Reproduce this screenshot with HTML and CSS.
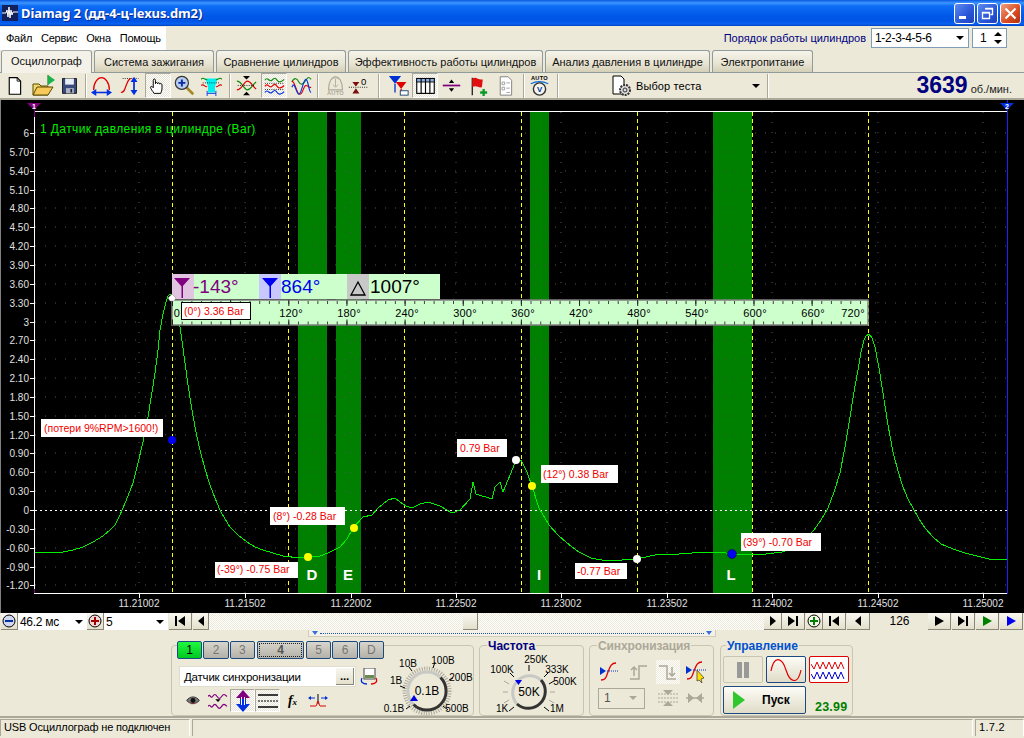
FILE: index.html
```html
<!DOCTYPE html>
<html lang="ru">
<head>
<meta charset="utf-8">
<title>Diamag 2</title>
<link rel="stylesheet" href="styles.css">
</head>
<body>
<svg class="sprite" width="0" height="0" aria-hidden="true">
  <symbol id="i-first" viewBox="0 0 14 10"><path d="M2 0h2v10H2zM12 0v10L5 5z"/></symbol>
  <symbol id="i-prev" viewBox="0 0 14 10"><path d="M10 0v10L4 5z"/></symbol>
  <symbol id="i-next" viewBox="0 0 14 10"><path d="M4 0v10l6-5z"/></symbol>
  <symbol id="i-last" viewBox="0 0 14 10"><path d="M2 0v10l7-5zM10 0h2v10h-2z"/></symbol>
  <symbol id="i-play" viewBox="0 0 14 10"><path d="M3 0v10l9-5z"/></symbol>
</svg>
<div class="app">
  <header class="titlebar">
    <svg class="appicon" width="16" height="16" viewBox="0 0 16 16"><rect width="16" height="16" fill="#12205c"/><path d="M0 8h4l1-3 1 7 1-10 1 11 1-8 1 5 1-3h5" fill="none" stroke="#fff"/></svg>
    <span class="titletext">Diamag 2 (дд-4-ц-lexus.dm2)</span>
    <div class="winbtns">
      <span class="winbtn"><svg width="21" height="21" viewBox="0 0 21 21"><rect x="5" y="13" width="7" height="3" fill="#fff"/></svg></span>
      <span class="winbtn"><svg width="21" height="21" viewBox="0 0 21 21"><path d="M8.5 5.5h7v6h-2M5.5 9.500h7v6h-7z" fill="none" stroke="#fff" stroke-width="1.300"/><path d="M8 5h8v1.500H8zM5 9h8v1.500H5z" fill="#fff"/></svg></span>
      <span class="winbtn close"><svg width="21" height="21" viewBox="0 0 21 21"><path d="M5.500 5.500l10 10M15.500 5.500l-10 10" stroke="#fff" stroke-width="2.200"/></svg></span>
    </div>
  </header>

  <div class="menurow">
    <nav class="menu"><span>Файл</span><span>Сервис</span><span>Окна</span><span>Помощь</span></nav>
    <div class="order">
      <span class="orderlabel">Порядок работы цилиндров</span>
      <span class="combo ordercombo">1-2-3-4-5-6<i class="caret"></i></span>
      <span class="combo spin">1<span class="spinarrows"><i class="caret up"></i><i class="caret"></i></span></span>
    </div>
  </div>

  <div class="tabs">
    <span class="tab active">Осциллограф</span>
    <span class="tab">Система зажигания</span>
    <span class="tab">Сравнение цилиндров</span>
    <span class="tab">Эффективность работы цилиндров</span>
    <span class="tab">Анализ давления в цилиндре</span>
    <span class="tab">Электропитание</span>
  </div>

  <div class="toolbar">
    <span class="tool"><svg viewBox="0 0 24 24"><path d="M6 3h9l4 4v15H6z" fill="#fff" stroke="#000" stroke-width="1.300"/><path d="M15 3v4h4" fill="none" stroke="#000"/></svg></span>
    <span class="tool ml3 big"><svg viewBox="0 0 24 24"><path d="M17 1v10" stroke="#060"/><path d="M17 1l7 5-7 5z" fill="#19b34a"/><path d="M2 10h6l2 2h7v9H2z" fill="#f3d96b" stroke="#5a4a00"/><path d="M2 21l4-8h16l-5 8z" fill="#f7c85a" stroke="#5a4a00"/></svg></span>
    <span class="tool"><svg viewBox="0 0 24 24"><path d="M4 4h16v17H4z" fill="#39497c" stroke="#111"/><path d="M7 4h10v7H7z" fill="#e8ecf4"/><path d="M8 15h9v6H8z" fill="#aab2c4"/><path d="M13 16h2v4h-2z" fill="#223"/></svg></span>
    <span class="sep ml3 mr1"></span>
    <span class="tool"><svg viewBox="0 0 24 24"><path d="M3 17C3 8 8 3 12 3s9 5 9 14" fill="none" stroke="#e00000" stroke-width="1.500"/><path d="M3 20h18" stroke="#0030e0" stroke-width="1.800"/><path d="M0 20l6-4v8zM24 20l-6-4v8z" fill="#0030e0"/></svg></span>
    <span class="tool ml3"><svg viewBox="0 0 24 24"><path d="M3 4h18" stroke="#000" stroke-dasharray="1 1.500"/><path d="M1 20c4 0 4-3 6-8s3-8 6-8" fill="none" stroke="#e00000" stroke-width="1.400"/><path d="M16 6v13" stroke="#0030e0" stroke-width="2"/><path d="M16 2l4 6h-8zM16 23l4-6h-8z" fill="#0030e0"/></svg></span>
    <span class="tool on ml2"><svg viewBox="0 0 24 24"><path d="M7 21c-2-3-4-5-4-7 0-1.500 2-1 3 .500V6c0-2 2.500-2 2.500 0v4c0-2 2.500-2 2.500 0 0-1.500 2.500-1.500 2.500 .500 0-1.500 2.500-1 2.500 .800V16c0 2-1 3-1.500 5z" fill="#fff" stroke="#000" stroke-width="1.100"/></svg></span>
    <span class="tool"><svg viewBox="0 0 24 24"><path d="M14 14l8 8" stroke="#a8862a" stroke-width="3"/><circle cx="9" cy="9" r="7.500" fill="#b9cdf0" stroke="#333" stroke-width="1.300"/><path d="M5 9h8M9 5v8" stroke="#0a2ca0" stroke-width="2.200"/></svg></span>
    <span class="tool ml1"><svg viewBox="0 0 24 24"><path d="M5 4h14l-3 9v7H8v-7z" fill="#00f0f0"/><path d="M0 5c3-4 5 2 7 0M17 5c2 2 4-4 7 0" fill="none" stroke="#0a8a0a" stroke-width="1.200"/><path d="M0 12c3-3 5 3 7 1M17 13c2 2 4-4 7-1" fill="none" stroke="#e00000" stroke-width="1.200"/><path d="M7 21h10" stroke="#0030e0"/><path d="M7 18v6M17 18v6" stroke="#0030e0"/><path d="M2 9h20" stroke="#000" stroke-dasharray="1 1.500"/></svg></span>
    <span class="sep ml5 mr2"></span>
    <span class="tool"><svg viewBox="0 0 24 24"><path d="M1 7c6 0 8 10 12 10s5-5 10-9" fill="none" stroke="#0a8a0a" stroke-width="1.300"/><path d="M1 17c6 0 8-10 12-10s5 5 10 9" fill="none" stroke="#e00000" stroke-width="1.300"/><path d="M2 12h20" stroke="#000" stroke-dasharray="1 1.500"/><path d="M8 1h8l-4 4zM8 23h8l-4-4z"/></svg></span>
    <span class="tool on ml2"><svg viewBox="0 0 24 24"><path d="M1 6c3-5 5 3 8 0s4-3 6 0 5 2 8-1" fill="none" stroke="#0a8a0a" stroke-width="1.300"/><path d="M1 13c3-5 5 3 8 0s4-3 6 0 5 2 8-1" fill="none" stroke="#e00000" stroke-width="1.300"/><path d="M1 20c3-5 5 3 8 0s4-3 6 0 5 2 8-1" fill="none" stroke="#0030e0" stroke-width="1.300"/><path d="M1 9.500h22M1 16.500h22" stroke="#000" stroke-dasharray="1 1.500"/></svg></span>
    <span class="tool ml1"><svg viewBox="0 0 24 24"><path d="M1 8c3-6 6-4 8 0s5 3 8-2 4-3 6-1" fill="none" stroke="#0a8a0a" stroke-width="1.300"/><path d="M1 7c4 0 5 15 9 15s4-10 7-10 3 3 6 2" fill="none" stroke="#e00000" stroke-width="1.300"/><path d="M1 14c3-9 5 8 8 8s5-17 8-17 3 15 6 15" fill="none" stroke="#0030e0" stroke-width="1.300"/></svg></span>
    <span class="sep ml3 mr3"></span>
    <span class="tool"><svg viewBox="0 0 24 24"><path d="M4 17C4 7 8 2 12 2s8 5 8 15z" fill="#ece9d8" stroke="#aca899" stroke-width="1.300"/><path d="M12 4v9M9 5l3-3 3 3M9 11l3 3 3-3" fill="none" stroke="#aca899"/><text x="12" y="23" class="toolmini greyed">AUTO</text></svg></span>
    <span class="tool mln3"><svg viewBox="0 0 24 24"><path d="M5 8h8l-4 5zM5 21h8l-4-6z" fill="#7a0f0f"/><path d="M1 14h22" stroke="#000" stroke-dasharray="1 1.500"/><text x="18" y="11" class="toolzero">0</text></svg></span>
    <span class="sep ml7 mr5"></span>
    <span class="tool"><svg viewBox="0 0 24 24"><path d="M1 1h14l-7 9z" fill="#0030d0"/><path d="M8 10v10" stroke="#0030d0" stroke-width="1.500"/><path d="M9 8h12l-6 8z" fill="#e00000"/><path d="M15 16v6" stroke="#e00000" stroke-width="1.500"/><rect x="14" y="18" width="9" height="5" fill="#fff" stroke="#123a70"/></svg></span>
    <span class="tool on ml1"><svg viewBox="0 0 24 24"><rect x="2" y="4" width="20" height="17" fill="#fff" stroke="#000" stroke-width="1.300"/><rect x="2" y="4" width="20" height="4" fill="#8db1e6" stroke="#000"/><path d="M7 4v17M12 4v17M17 4v17" stroke="#000" stroke-width="1.300"/></svg></span>
    <span class="tool"><svg viewBox="0 0 24 24"><path d="M2 12h20" stroke="#800080" stroke-width="2"/><path d="M9 9h6l-3-4zM9 15h6l-3 4z"/></svg></span>
    <span class="tool"><svg viewBox="0 0 24 24"><path d="M6 3v20" stroke="#000" stroke-width="1.300"/><path d="M6 4c5-3 6 2 12 1l-1 9c-4 1-7-3-11 0z" fill="#e01010"/><path d="M15 20h8M19 16v8" stroke="#0a9a2a" stroke-width="2.600"/></svg></span>
    <span class="tool ml2"><svg viewBox="0 0 24 24"><path d="M6 2h9l4 4v17H6z" fill="#fff" stroke="#777"/><path d="M8 8h3v3H8zM8 14h3v3H8zM13 9h4M13 15h4M13 20h4" fill="none" stroke="#999"/></svg></span>
    <span class="sep ml5 mr1"></span>
    <span class="tool"><svg viewBox="0 0 24 24"><text x="12" y="6" class="toolmini">AUTO</text><path d="M2 10c6-3 14-3 20 0" fill="none" stroke="#0a6ae0" stroke-width="1.300"/><circle cx="12" cy="16" r="7" fill="#f5f4ec" stroke="#333" stroke-width="1.600"/><text x="12" y="19.500" class="toolv">V</text></svg></span>
    <span class="sep ml5"></span>
    <div class="testpick">
      <svg width="22" height="22" viewBox="0 0 22 22"><path d="M2 1h8l3 3v15H2z" fill="#fff" stroke="#000"/><circle cx="14" cy="15" r="5" fill="#ddd" stroke="#333" stroke-width="2" stroke-dasharray="2 1"/><circle cx="14" cy="15" r="2" fill="none" stroke="#333"/></svg>
      <span class="testlabel">Выбор теста</span>
      <i class="caret"></i>
    </div>
    <span class="sep"></span>
    <div class="rpm"><b>3639</b><span>об./мин.</span></div>
  </div>

  <div class="chart">
    <svg width="1024" height="513" viewBox="0 100 1024 513">
      <rect x="0" y="100" width="1024" height="513" fill="#000"/>
      <rect x="0" y="100" width="1" height="513" fill="#808080"/>
      <g fill="#008000">
        <rect x="298" y="112" width="29" height="481"/>
        <rect x="336" y="112" width="25" height="481"/>
        <rect x="530" y="112" width="19" height="481"/>
        <rect x="713" y="112" width="39" height="481"/>
      </g>
      <path class="griddots" d="M35 133H1007M35 152H1007M35 171H1007M35 190H1007M35 208H1007M35 227H1007M35 246H1007M35 265H1007M35 284H1007M35 303H1007M35 322H1007M35 340H1007M35 359H1007M35 378H1007M35 397H1007M35 416H1007M35 435H1007M35 453H1007M35 472H1007M35 491H1007M35 529H1007M35 548H1007M35 567H1007M35 585H1007M139 112V593M245 112V593M351 112V593M456 112V593M561 112V593M667 112V593M772 112V593M878 112V593M983 112V593"/>
      <path class="yellowdash" d="M172.500 112V593M288.500 112V593M404.500 112V593M521.500 112V593M637.500 112V593M752.500 112V593M868.500 112V593"/>
      <path class="zeroline" d="M35 510.500H1007"/>
      <path class="axis" d="M34.500 111V594M34 111.500H1008M34 593.500H1008M30 133.500H34M30 152.500H34M30 171.500H34M30 190.500H34M30 208.500H34M30 227.500H34M30 246.500H34M30 265.500H34M30 284.500H34M30 303.500H34M30 322.500H34M30 340.500H34M30 359.500H34M30 378.500H34M30 397.500H34M30 416.500H34M30 435.500H34M30 453.500H34M30 472.500H34M30 491.500H34M30 510.500H34M30 529.500H34M30 548.500H34M30 567.500H34M30 585.500H34M139.500 594V598M245.500 594V598M351.500 594V598M456.500 594V598M561.500 594V598M667.500 594V598M772.500 594V598M878.500 594V598M983.500 594V598"/>
      <path d="M1007.500 100V594" stroke="#2020ff" fill="none"/>
      <path d="M27 103h14l-7 7z" fill="#800080"/><path d="M34.500 110v7M34.500 589v4" stroke="#800080" fill="none"/>
      <text x="34" y="109" class="markernum">1</text>
      <path d="M1000 103h14l-7 7z" fill="#0030e0"/><text x="1007" y="109" class="markernum">2</text>
      <text x="40" y="133" class="charttitle">1 Датчик давления в цилиндре (Bar)</text>
      <g class="ylabels">
        <text x="29" y="137">6</text><text x="29" y="156">5.70</text><text x="29" y="175">5.40</text><text x="29" y="194">5.10</text><text x="29" y="212">4.80</text><text x="29" y="231">4.50</text><text x="29" y="250">4.20</text><text x="29" y="269">3.90</text><text x="29" y="288">3.60</text><text x="29" y="307">3.30</text><text x="29" y="326">3</text><text x="29" y="344">2.70</text><text x="29" y="363">2.40</text><text x="29" y="382">2.10</text><text x="29" y="401">1.80</text><text x="29" y="420">1.50</text><text x="29" y="439">1.20</text><text x="29" y="457">0.90</text><text x="29" y="476">0.60</text><text x="29" y="495">0.30</text><text x="29" y="514">0</text><text x="29" y="533">-0.30</text><text x="29" y="552">-0.60</text><text x="29" y="571">-0.90</text><text x="29" y="589">-1.20</text>
      </g>
      <g class="xlabels">
        <text x="139" y="607">11.21002</text><text x="245" y="607">11.21502</text><text x="351" y="607">11.22002</text><text x="456" y="607">11.22502</text><text x="561" y="607">11.23002</text><text x="667" y="607">11.23502</text><text x="772" y="607">11.24002</text><text x="878" y="607">11.24502</text><text x="983" y="607">11.25002</text>
      </g>
      <polyline class="trace" points="35,552 45,553 63,552 73,550 83,547 93,542 103,536 110,530 115,525 119,517 123,508 128,496 133,483 138,463 143,442 148,417 152,392 155,373 158,350 160,330 163,314 166,302 168,296 170,294 172,296 175,303 178,316 180,327 183,348 185,363 188,385 192,410 196,432 200,450 205,469 210,485 215,498 220,510 225,519 230,527 238,535 247,542 255,547 263,550 283,556 300,558 320,556 328,553 340,547 347,539 353,528 363,517 372,515 378,508 388,500 395,498 400,502 406,506 412,508 420,504 428,502 440,506 452,513 460,510 470,499 473,482 476,494 492,499 495,487 500,482 503,492 515,463 521,460 527,472 532,486 539,508 549,525 558,535 567,543 579,552 591,558 607,561 637,559 659,554 679,554 706,552 720,552 732,554 758,555 782,552 800,545 807,538 814,530 821,520 828,508 834,492 840,473 845,447 850,417 854,392 858,370 861,352 864,340 866,336 869,334 872,338 875,347 879,368 883,393 888,425 893,452 898,471 903,487 908,499 913,508 919,519 925,528 933,537 941,544 953,549 965,553 977,556 989,559 1007,559"/>
      <g class="dots">
        <circle cx="172" cy="440" r="4" fill="#0000f0"/>
        <circle cx="308" cy="557" r="4" fill="#ffff00"/>
        <circle cx="354" cy="528" r="4" fill="#ffff00"/>
        <circle cx="516" cy="460" r="4" fill="#fff"/>
        <circle cx="532" cy="486" r="4" fill="#ffff00"/>
        <circle cx="637" cy="559" r="4" fill="#fff"/>
        <circle cx="732" cy="554" r="4.500" fill="#0000f0" stroke="#003"/>
      </g>
      <g class="bandletters">
        <text x="312" y="580">D</text><text x="348" y="580">E</text><text x="539" y="580">I</text><text x="731" y="580">L</text>
      </g>
      <rect x="172" y="274" width="268" height="25" fill="#ccffcc"/>
      <rect x="172" y="274" width="22" height="25" fill="#e0c4e0"/>
      <rect x="259" y="274" width="22" height="25" fill="#c8c8ff"/>
      <rect x="347" y="274" width="22" height="25" fill="#c8c8c8"/>
      <path d="M174 278h16l-8 9zM181.500 286h1.500v12h-1.500z" fill="#800080"/>
      <path d="M262 278h16l-8 9zM269.500 286h1.500v12h-1.500z" fill="#0000f0"/>
      <path d="M351 295h14l-7-13z" fill="none" stroke="#000" stroke-width="1.300"/>
      <text x="193" y="293" class="cur purple">-143°</text>
      <text x="281" y="293" class="cur blue">864°</text>
      <text x="370" y="293" class="cur">1007°</text>
      <rect x="172" y="300" width="696" height="25" fill="#ccffcc" stroke="#808080" stroke-width="1.500"/>
      <path class="rulerminor" d="M172 302.500H868M172 323H868"/>
      <path class="rulermajor" d="M172 303H868M172 322.500H868"/>
      <g class="rulerlabels">
        <text x="177" y="317">0</text><text x="291" y="317">120°</text><text x="349" y="317">180°</text><text x="407" y="317">240°</text><text x="465" y="317">300°</text><text x="523" y="317">360°</text><text x="581" y="317">420°</text><text x="639" y="317">480°</text><text x="697" y="317">540°</text><text x="755" y="317">600°</text><text x="813" y="317">660°</text><text x="853" y="317">720°</text>
      </g>
      <path d="M168 298l4-4 4 4-2 3h-4z" fill="#fff" stroke="#888" stroke-width=".5"/>
      <g class="notes">
        <rect x="181.500" y="302.500" width="69" height="17" fill="#fff" stroke="#000"/><text x="184" y="315">(0°) 3.36 Bar</text>
        <rect x="41" y="419" width="122" height="18" fill="#fff"/><text x="44" y="432">(потери 9%RPM&gt;1600!)</text>
        <rect x="270" y="507" width="75" height="18" fill="#fff"/><text x="273" y="520">(8°) -0.28 Bar</text>
        <rect x="215" y="562" width="83" height="16" fill="#fff"/><text x="217" y="573">(-39°) -0.75 Bar</text>
        <rect x="457" y="439" width="50" height="18" fill="#fff"/><text x="460" y="452">0.79 Bar</text>
        <rect x="541" y="465" width="77" height="18" fill="#fff"/><text x="543" y="478">(12°) 0.38 Bar</text>
        <rect x="575" y="563" width="52" height="16" fill="#fff"/><text x="577" y="575">-0.77 Bar</text>
        <rect x="741" y="533" width="80" height="18" fill="#fff"/><text x="743" y="546">(39°) -0.70 Bar</text>
      </g>
    </svg>
  </div>

  <div class="slider">
    <span class="btn sq"><svg width="14" height="14" viewBox="0 0 14 14"><circle cx="7" cy="7" r="6" fill="#cfd8f0" stroke="#000"/><path d="M3 7h8" stroke="#0030a0" stroke-width="2"/></svg></span>
    <span class="scombo first">46.2 мс<i class="caret"></i></span>
    <span class="btn sq"><svg width="14" height="14" viewBox="0 0 14 14"><circle cx="7" cy="7" r="6" fill="#f0d8d8" stroke="#000"/><path d="M3 7h8M7 3v8" stroke="#a00000" stroke-width="2"/></svg></span>
    <span class="scombo second">5<i class="caret"></i></span>
    <span class="btn nav w24"><svg><use href="#i-first"/></svg></span>
    <span class="btn nav w16"><svg><use href="#i-prev"/></svg></span>
    <div class="track"><span class="thumb"></span></div>
    <span class="btn nav w18"><svg><use href="#i-next"/></svg></span>
    <span class="btn nav w24"><svg><use href="#i-last"/></svg></span>
    <span class="btn sq"><svg width="14" height="14" viewBox="0 0 14 14"><circle cx="7" cy="7" r="6" fill="#f4f4e8" stroke="#000"/><path d="M3 7h8M7 3v8" stroke="#008000" stroke-width="2"/></svg></span>
    <span class="btn nav w24"><svg><use href="#i-first"/></svg></span>
    <span class="btn nav w24"><svg><use href="#i-prev"/></svg></span>
    <span class="counter">126</span>
    <span class="btn nav w24"><svg><use href="#i-play"/></svg></span>
    <span class="btn nav w24"><svg><use href="#i-last"/></svg></span>
    <span class="btn nav w24 green"><svg><use href="#i-play"/></svg></span>
    <span class="btn nav w24 blue"><svg><use href="#i-play"/></svg></span>
  </div>

  <div class="rangebar"><i class="rangemark"></i><span class="rangedots"></span><i class="rangemark"></i></div>

  <div class="panel">
    <section class="group channels">
      <div class="chleft">
        <div class="chbtns">
          <span class="ch on">1</span><span class="ch">2</span><span class="ch">3</span><span class="ch big">4</span><span class="ch">5</span><span class="ch">6</span><span class="ch">D</span>
        </div>
        <div class="sensor">
          <div class="sensorbox"><span>Датчик синхронизации</span><span class="btn dots3">...</span></div>
          <svg width="18" height="18" viewBox="0 0 18 18"><rect x="4" y="0" width="11" height="11" fill="#fff" stroke="#444"/><rect x="5" y="7" width="9" height="3" fill="#6a8a50"/><path d="M2 10c-2 4 1 6 5 6" fill="none" stroke="#0030d0" stroke-width="1.300"/><path d="M16 10c2 4-1 6-5 6" fill="none" stroke="#e00000" stroke-width="1.300"/></svg>
        </div>
        <div class="chicons">
          <span class="cicon"><svg width="16" height="13" viewBox="0 0 20 16"><path d="M2 8c4-6 12-6 16 0-4 5-12 5-16 0z" fill="#777" stroke="#222"/><circle cx="10" cy="8" r="3" fill="#111"/><path d="M7 12h5" stroke="#b02020"/></svg></span>
          <span class="cicon"><svg width="20" height="18" viewBox="0 0 22 20"><path d="M0 5c2-4 3 3 5 0s3-3 5 0 3 3 5 0 3-3 6 0" fill="none" stroke="#800080" stroke-width="1.300"/><path d="M0 16c2-4 3 3 5 0s3-3 5 0 3 3 5 0 3-3 6 0" fill="none" stroke="#800080" stroke-width="1.300"/><path d="M8 8h6l-3 3z"/></svg></span>
          <span class="cicon active"><svg width="20" height="22" viewBox="0 0 20 22"><path d="M10 0l7 8h-4v5H7V8H3z" fill="#800080"/><path d="M10 22l-7-8h4V9h6v5h4z" fill="#0030e0"/><path d="M8 7h1v8H8zM11 7h1v8h-1z" fill="#fff"/></svg></span>
          <span class="cicon active"><svg width="20" height="18" viewBox="0 0 20 18"><path d="M0 3h20M0 15h20" stroke="#000" stroke-width="1.300"/><path d="M0 9h20" stroke="#000" stroke-dasharray="2 1"/></svg></span>
          <span class="cicon"><i class="fx">f<sub>x</sub></i></span>
          <span class="cicon"><svg width="20" height="16" viewBox="0 0 20 16"><path d="M10 1v10" stroke="#000"/><path d="M2 13h6c1 0 1-5 2-5s1 5 2 5h6" fill="none" stroke="#e00000"/><path d="M1 5h6M13 5h6" stroke="#0030d0"/><path d="M0 5l3-2v4zM20 5l-3-2v4z" fill="#0030d0"/></svg></span>
        </div>
      </div>
      <svg class="knob" width="88" height="70" viewBox="386 648 88 70">
        <circle cx="427" cy="691" r="22.500" fill="none" stroke="#aca899" stroke-width="4" stroke-dasharray="1 1.500"/>
        <circle cx="427" cy="691" r="19" fill="#ece9d8"/>
        <path d="M413.500 704.500A19 19 0 0 1 440.500 677.500" fill="none" stroke="#c8c8c4" stroke-width="3"/>
        <path d="M440.500 677.500A19 19 0 0 1 413.500 704.500" fill="none" stroke="#333" stroke-width="3"/>
        <path d="M410 706l-4 3M405 688l-5-2M412 671l-3-4M433 668l2-6M449 680l4-2M443 706l5 4" stroke="#000" fill="none"/>
        <path d="M414 695l4 6h-8z" fill="#0000e0"/>
        <g class="knoblab"><text x="394" y="712">0.1В</text><text x="396" y="684">1В</text><text x="408" y="667">10В</text><text x="443" y="664">100В</text><text x="461" y="681">200В</text><text x="457" y="712">500В</text></g>
        <text x="427" y="695" class="knobval">0.1В</text>
      </svg>
    </section>

    <section class="group freq">
      <span class="legend navy">Частота</span>
      <svg class="knob" width="105" height="70" viewBox="479 648 105 70">
        <path d="M549 700l5 3M550 692h5M508 692h-5M509 684l-5-3M509 700l-5 3" stroke="#aca899" fill="none"/>
        <path d="M514 677l-4-4M529 671v-6M544 677l4-4M549 684l5-3M514 707l-5 4M544 707l5 4" stroke="#000" fill="none"/>
        <circle cx="529" cy="692" r="17" fill="#ece9d8"/>
        <path d="M517 704A17 17 0 0 1 541 680" fill="none" stroke="#c8c8c4" stroke-width="3"/>
        <path d="M541 680A17 17 0 0 1 517 704" fill="none" stroke="#333" stroke-width="3"/>
        <path d="M515 680h7l-3.500 5z" fill="#0000e0"/>
        <g class="knoblab"><text x="502" y="673">100K</text><text x="536" y="663">250K</text><text x="557" y="673">333K</text><text x="565" y="685">500K</text><text x="502" y="712">1K</text><text x="557" y="712">1M</text></g>
        <text x="529" y="696" class="knobval">50K</text>
      </svg>
    </section>

    <section class="group sync">
      <span class="legend grey">Синхронизация</span>
      <div class="syncrow">
        <span class="sicon"><svg width="20" height="20" viewBox="0 0 20 20"><path d="M1 18c5 0 5-3 7-8s3-9 8-9" fill="none" stroke="#e00000" stroke-width="1.300"/><path d="M7 9h12" stroke="#0030d0" stroke-dasharray="1 1"/><path d="M0 5l6 4-6 4z" fill="#0030d0"/></svg></span>
        <span class="sicon"><svg width="20" height="20" viewBox="0 0 20 20"><path d="M1 17h9V4h8" fill="none" stroke="#aca899" stroke-width="1.500"/><path d="M5 14V6M2 8l3-3 3 3" fill="none" stroke="#aca899" stroke-width="1.500"/></svg></span>
        <span class="sicon hatch"><svg width="20" height="20" viewBox="0 0 20 20"><path d="M1 4h8v13h9" fill="none" stroke="#aca899" stroke-width="1.500"/><path d="M14 5v8M11 11l3 3 3-3" fill="none" stroke="#aca899" stroke-width="1.500"/></svg></span>
        <span class="sicon"><svg width="22" height="22" viewBox="0 0 22 22"><path d="M1 18c5 0 5-3 7-8s3-9 8-9" fill="none" stroke="#e00000" stroke-width="1.300"/><path d="M7 9h14" stroke="#0030d0" stroke-dasharray="1 1"/><path d="M0 5l6 4-6 4z" fill="#0030d0"/><path d="M11 9l7 8-3 1 1 4-3-3-2 1z" fill="#ffe000" stroke="#333" stroke-width=".7"/></svg></span>
      </div>
      <div class="syncrow low">
        <span class="combo gcombo">1<i class="caret g"></i></span>
        <span class="sicon"><svg width="20" height="20" viewBox="0 0 20 20"><path d="M5 2h10l-5 5zM5 18h10l-5-5z" fill="#aca899"/><path d="M0 6h20M0 10h20M0 14h20" stroke="#aca899" stroke-dasharray="2 1"/></svg></span>
        <span class="sicon"><svg width="20" height="20" viewBox="0 0 20 20"><path d="M1 10h18" stroke="#aca899" stroke-width="1.500"/><path d="M3 5l6 5-6 5zM17 5l-6 5 6 5z" fill="#aca899"/></svg></span>
      </div>
    </section>

    <section class="group control">
      <span class="legend bluel">Управление</span>
      <div class="ctrlrow">
        <span class="cbtn plain"><svg width="18" height="18" viewBox="0 0 18 18"><rect x="3" y="1" width="5" height="16" fill="#999"/><rect x="10" y="1" width="5" height="16" fill="#999"/></svg></span>
        <span class="cbtn"><svg width="32" height="22" viewBox="0 0 32 22"><path d="M1 12C4-4 12-2 16 11s12 15 15 0" fill="none" stroke="#e00000" stroke-width="1.200"/></svg></span>
        <span class="cbtn red"><svg width="36" height="24" viewBox="0 0 36 24"><path d="M0 6l3 5 3-7 3 7 3-7 3 7 3-7 3 7 3-7 3 7 3-7 3 7" fill="none" stroke="#e00000"/><path d="M0 16l3 5 3-7 3 7 3-7 3 7 3-7 3 7 3-7 3 7 3-7 3 7" fill="none" stroke="#0000d0"/></svg></span>
      </div>
      <div class="ctrlrow low">
        <span class="cbtn start"><svg width="12" height="18" viewBox="0 0 12 18"><path d="M0 0l12 9-12 9z" fill="#2ec82e"/></svg><b>Пуск</b></span>
        <span class="fps">23.99</span>
      </div>
    </section>
  </div>

  <footer class="status">
    <span class="cell c1">USB Осциллограф не подключен</span>
    <span class="cell c2"></span>
    <span class="cell c3">1.7.2</span>
  </footer>
</div>
</body>
</html>
```
FILE: styles.css
```css
* { box-sizing: border-box; }
html, body { margin: 0; padding: 0; height: 100%; overflow: hidden; }
body { background: #ece9d8; font: 11px "Liberation Sans", Arial, sans-serif; color: #000; }
.sprite { position: absolute; }
.app { display: flex; flex-direction: column; width: 1024px; height: 738px; }

.titlebar { height: 26px; display: flex; align-items: center; padding: 0 3px 0 2px; gap: 3px;
  background: linear-gradient(#0a5be0 0, #3d95ff 3px, #0e6df5 6px, #0058e8 16px, #0055e6 21px, #0a62f0 24px, #003fc0 26px); }
.appicon { flex: none; }
.titletext { color: #fff; font: bold 13px "Noto Sans", sans-serif; text-shadow: 1px 1px #0a2a90; letter-spacing: -.1px; }
.winbtns { margin-left: auto; display: flex; gap: 2px; }
.winbtn { width: 21px; height: 21px; border: 1px solid #fff; border-radius: 3px; background: linear-gradient(135deg, #5c8cf0, #2a55d8 60%, #1c3fb8); display: flex; }
.winbtn svg { margin: -1px; flex: none; }
.winbtn.close { background: linear-gradient(135deg, #f0a080, #d84a20 60%, #b03010); }

.menurow { height: 24px; display: flex; justify-content: space-between; align-items: center; padding-right: 17px; }
.menu { background: #fff; width: 166px; height: 23px; display: flex; align-items: center; padding-left: 6px; gap: 9px; letter-spacing: -.25px; }
.order { display: flex; align-items: center; }
.orderlabel { color: #000080; margin-right: 5px; }
.combo { background: #fff; border: 1px solid #7f9db9; height: 20px; display: flex; align-items: center; justify-content: space-between; padding: 0 4px 0 3px; font-size: 12px; letter-spacing: -.3px; }
.ordercombo { width: 98px; }
.spin { width: 35px; margin-left: 3px; padding: 0 4px 0 7px; }
.spinarrows { display: flex; flex-direction: column; gap: 4px; }
.caret { display: inline-block; width: 0; height: 0; border: 4px solid transparent; border-top-color: #000; border-bottom: 0; }
.caret.up { border-top: 0; border-bottom: 4px solid #000; }
.caret.g { border-top-color: #aca899; }

.tabs { height: 22px; display: grid; grid-template-columns: 91px 120px 130px 195px 165px 101px; gap: 2px; padding-left: 1px; }
.tab { height: 22px; border: 1px solid #919b9c; border-bottom: 0; border-radius: 3px 3px 0 0; background: linear-gradient(#f6f4ea, #e8e4d2 60%, #d4cfb6); display: flex; align-items: center; justify-content: center; color: #111; }
.tab.active { background: #f4f2e8; height: 23px; border-top-color: #aaa; position: relative; z-index: 1; padding-bottom: 2px; }

.toolbar { height: 28px; display: flex; align-items: center; padding-left: 1px; border-top: 1px solid #919b9c; border-bottom: 2px solid #aca899; }
.tool { width: 26px; height: 25px; flex: none; display: flex; align-items: center; justify-content: center; }
.tool svg { width: 21px; height: 21px; }
.tool.big svg { width: 24px; height: 24px; }
.tool.on { background: repeating-conic-gradient(#fff 0 25%, #e6e3d2 0 50%) 0 0/2px 2px; border-left: 1px solid #aca899; border-top: 1px solid #aca899; border-right: 1px solid #fff; border-bottom: 1px solid #fff; }
.ml1 { margin-left: 1px; }
.ml2 { margin-left: 2px; }
.ml3 { margin-left: 3px; }
.ml5 { margin-left: 5px; }
.ml7 { margin-left: 7px; }
.mln3 { margin-left: -3px; }
.mr1 { margin-right: 1px; }
.mr2 { margin-right: 2px; }
.mr3 { margin-right: 3px; }
.mr5 { margin-right: 5px; }
.sep { width: 2px; height: 24px; flex: none; border-left: 1px solid #aca899; border-right: 1px solid #fff; }
.toolmini { font: bold 6.500px "Liberation Sans", sans-serif; text-anchor: middle; letter-spacing: .3px; }
.toolmini.greyed { fill: #aca899; }
.toolzero { font: 11px "Liberation Sans", sans-serif; text-anchor: middle; }
.toolv { font: bold 9px "Liberation Sans", sans-serif; fill: #0030a0; text-anchor: middle; }
.testpick { width: 208px; height: 24px; flex: none; display: flex; align-items: center; padding: 0 7px 0 52px; gap: 3px; }
.testlabel { flex: 1; letter-spacing: .1px; }
.rpm { margin-left: auto; padding-right: 12px; display: flex; align-items: baseline; gap: 3px; color: #000080; }
.rpm b { font: bold 23px "Liberation Sans", sans-serif; }
.rpm span { color: #222; }

.chart { height: 513px; line-height: 0; }
.griddots { stroke: #555; fill: none; stroke-dasharray: 1 9; }
.yellowdash { stroke: #ffff00; fill: none; stroke-dasharray: 4 3; }
.zeroline { stroke: #fff; fill: none; stroke-dasharray: 2 3; }
.axis { stroke: #fff; fill: none; }
.trace { fill: none; stroke: #00f000; stroke-width: 1; shape-rendering: crispEdges; }
.markernum { font: bold 7px "Liberation Sans", sans-serif; fill: #fff; text-anchor: middle; }
.charttitle { font: 12px "Liberation Sans", sans-serif; fill: #00f000; letter-spacing: .4px; }
.ylabels text { font: 10px "Liberation Sans", sans-serif; fill: #e0e0e0; text-anchor: end; }
.xlabels text { font: 10px "Liberation Sans", sans-serif; fill: #e0e0e0; text-anchor: middle; }
.bandletters text { font: bold 15px "Liberation Sans", sans-serif; fill: #fff; text-anchor: middle; }
.cur { font: 19px "Liberation Sans", sans-serif; fill: #000; }
.cur.purple { fill: #800080; }
.cur.blue { fill: #0000f0; }
.rulerminor { stroke: #444; stroke-width: 3; stroke-dasharray: 1 8.690; fill: none; }
.rulermajor { stroke: #222; stroke-width: 6; stroke-dasharray: 1 57.150; fill: none; }
.rulerlabels text { font: 11px "Liberation Sans", sans-serif; fill: #000; text-anchor: middle; letter-spacing: .2px; }
.notes text { font: 10.500px "Liberation Sans", sans-serif; fill: #f00000; }
.dots circle { stroke-width: .5; }

.slider { height: 17px; display: flex; align-items: stretch; padding-left: 1px; }
.btn { background: linear-gradient(#f8f7f0, #e4e0cc); border-right: 1px solid #8a8878; border-bottom: 1px solid #8a8878; display: flex; align-items: center; justify-content: center; flex: none; }
.btn.sq { width: 17px; }
.scombo { background: #fff; display: flex; align-items: center; justify-content: space-between; padding: 0 4px 0 2px; font-size: 12px; flex: none; letter-spacing: -.3px; }
.scombo.first { width: 69px; }
.scombo.second { width: 64px; margin-right: 1px; }
.nav svg { width: 14px; height: 10px; }
.w16 { width: 16px; }
.w18 { width: 18px; }
.w24 { width: 23px; margin-right: 1px; }
.green svg { fill: #008000; }
.blue svg { fill: #0000f0; }
.track { flex: 1; background: repeating-conic-gradient(#fff 0 25%, #ece9d8 0 50%) 0 0/2px 2px; padding-left: 254px; }
.thumb { display: block; width: 15px; height: 17px; background: linear-gradient(#f8f7f0, #e4e0cc); border-right: 1px solid #8a8878; border-bottom: 1px solid #8a8878; }
.counter { width: 57px; flex: none; text-align: center; font-size: 12px; line-height: 17px; }

.rangebar { height: 7px; width: 408px; margin-left: 308px; border: 1px solid #d0ccb8; border-top: 0; display: flex; align-items: center; justify-content: space-between; padding: 0 3px; gap: 2px; background: #f4f2e8; }
.rangemark { width: 0; height: 0; border: 3px solid transparent; border-top: 4px solid #3070d8; border-bottom: 0; flex: none; }
.rangedots { flex: 1; border-top: 1px dotted #2050b0; }

.panel { height: 81px; display: flex; padding-left: 171px; gap: 5px; padding-top: 8px; border-bottom: 2px solid #aca899; }
.group { height: 71px; border: 1px solid #c8c5b0; border-radius: 4px; position: relative; flex: none; }
.channels { width: 303px; display: flex; }
.freq { width: 105px; }
.sync { width: 125px; padding: 14px 0 0 8px; }
.control { width: 133px; margin-left: 1px; padding: 10px 0 0 2px; }
.legend { position: absolute; top: -6px; left: 7px; background: #ece9d8; font: bold 12px "Liberation Sans", sans-serif; padding: 0 1px; line-height: 13px; }
.control .legend { left: 5px; }
.sync .legend { letter-spacing: -.1px; }
.navy { color: #000080; }
.grey { color: #aca899; }
.bluel { color: #0050d0; }

.chleft { width: 212px; flex: none; padding-left: 5px; }
.chbtns { display: flex; gap: 1px; margin-top: -5px; position: relative; background: #ece9d8; }
.ch { width: 26px; height: 18px; border: 1px solid #1c4a80; border-radius: 2px; background: linear-gradient(#d8d6cc, #b4b2a8); color: #777; font-size: 12px; display: flex; align-items: center; justify-content: center; }
.ch.on { background: linear-gradient(#20f840, #00c820); color: #000; }
.ch.big { width: 48px; margin: 0 1px; font-weight: bold; color: #555; outline: 1px dotted #222; outline-offset: -3px; }
.sensor { display: flex; align-items: center; margin: 7px 0 0 2px; gap: 4px; }
.sensorbox { width: 177px; height: 21px; background: #fff; display: flex; align-items: center; justify-content: space-between; padding: 0 1px 0 4px; font-size: 11.500px; letter-spacing: -.2px; border: 1px solid #e0dece; }
.dots3 { width: 18px; height: 17px; font-weight: bold; line-height: 8px; }
.chicons { display: flex; margin: 2px 0 0 3px; }
.cicon { width: 25px; height: 23px; display: flex; align-items: center; justify-content: center; flex: none; }
.cicon.active { background: repeating-conic-gradient(#fff 0 25%, #e6e3d2 0 50%) 0 0/2px 2px; border: 1px solid #fff; border-color: #aca899 #fff #fff #aca899; }
.fx { font: bold italic 14px "Liberation Serif", serif; }
.fx sub { font-size: 9px; vertical-align: baseline; }
.knob { display: block; flex: none; overflow: visible; }
.channels .knob { margin: 2px 0 0 2px; }
.freq .knob { margin: 2px 0 0 -1px; }
.knoblab text { font: 10px "Liberation Sans", sans-serif; text-anchor: middle; }
.knobval { font: 12px "Liberation Sans", sans-serif; text-anchor: middle; }

.syncrow { display: flex; align-items: center; gap: 5px; }
.syncrow.low { margin-top: 2px; gap: 3px; }
.sicon { width: 24px; height: 24px; display: flex; align-items: center; justify-content: center; flex: none; }
.sicon.hatch { background: repeating-conic-gradient(#fff 0 25%, #ece9d8 0 50%) 0 0/2px 2px; }
.gcombo { width: 47px; height: 21px; background: #ece9d8; border-color: #aca899; color: #555; margin-right: 8px; padding: 0 7px 0 5px; }
.ctrlrow { display: flex; gap: 3px; }
.ctrlrow.low { margin-top: 3px; align-items: flex-end; gap: 9px; }
.cbtn { width: 40px; height: 27px; border: 1px solid #1c4a80; border-radius: 2px; background: linear-gradient(#fdfcf6, #e0dcc8); display: flex; align-items: center; justify-content: center; flex: none; }
.cbtn.plain { border-color: #c8c5b0; background: #ece9d8; }
.cbtn.red { border-color: #e00000; background: #fff; }
.cbtn.start { width: 83px; height: 28px; justify-content: flex-start; padding-left: 9px; gap: 17px; }
.cbtn.start b { font-size: 12px; }
.fps { color: #008000; font: bold 12.500px "Liberation Sans", sans-serif; line-height: 14px; letter-spacing: .2px; }

.status { height: 18px; display: flex; gap: 2px; padding-top: 1px; }
.cell { height: 17px; border-left: 1px solid #aca899; border-top: 1px solid #aca899; border-right: 1px solid #fff; line-height: 15px; padding-left: 3px; letter-spacing: -.15px; }
.c1 { width: 190px; }
.c2 { flex: 1; }
.c3 { width: 49px; letter-spacing: .3px; }
```
